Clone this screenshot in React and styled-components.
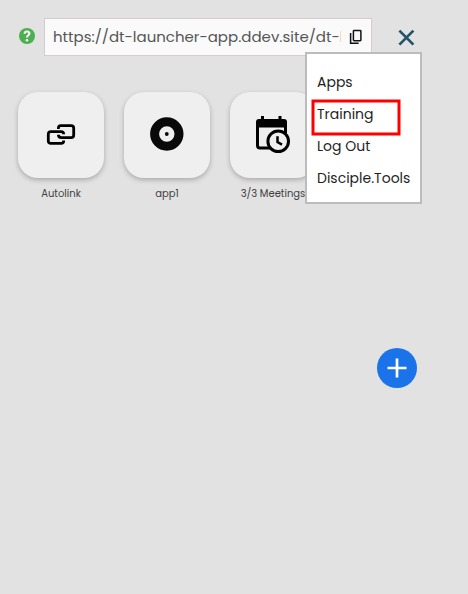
import React from 'react';
import styled, { createGlobalStyle } from 'styled-components';

const GlobalStyle = createGlobalStyle`
  *, *::before, *::after { box-sizing: border-box; }
  body {
    margin: 0;
    background: #e2e2e2;
    font-family: Poppins, Inter, "Open Sans", sans-serif;
    color: #212529;
  }
  button { border: 0; padding: 0; background: none; font: inherit; color: inherit; cursor: pointer; }
`;

const Page = styled.main`
  position: relative;
  height: 594px;
  overflow: hidden;
  padding-top: 18px;
`;

const Toolbar = styled.header`
  display: flex;
  height: 38px;
  padding-left: 19px;
`;

const HelpIcon = styled.svg`
  width: 16px;
  height: 16px;
  margin: 10px 9px 0 0;
`;

const UrlField = styled.div`
  display: flex;
  width: 328px;
  height: 38px;
  padding: 0 8px;
  background: #fafafa;
  border: 1px solid #d4cdcf;
`;

const UrlText = styled.div`
  width: 288px;
  overflow: hidden;
  white-space: nowrap;
  font-size: 15px;
  line-height: 35px;
  color: #555;
`;

const CopyButton = styled.button`
  margin: 10px 0 0 8px;
  width: 14px;
  height: 16px;
  svg { display: block; }
`;

const CloseButton = styled.button`
  width: 18px;
  height: 18px;
  margin: 10px 0 0 25px;
  svg { display: block; }
`;

const AppGrid = styled.section`
  display: grid;
  grid-template-columns: repeat(3, 88px);
  column-gap: 18px;
  margin: 36px 0 0 17px;
`;

const AppItem = styled.div`
  display: flex;
  flex-direction: column;
  align-items: center;
`;

const Tile = styled.button`
  width: 86px;
  height: 86px;
  border-radius: 20px;
  background: #efefef;
  box-shadow: 0 2px 5px rgba(0, 0, 0, 0.25);
  svg { display: block; }
`;

const AppLabel = styled.span`
  margin-top: 8px;
  font-size: 10px;
  line-height: 15px;
  white-space: nowrap;
  color: #3f3f3f;
`;

const Menu = styled.nav`
  position: absolute;
  left: 305px;
  top: 52px;
  width: 117px;
  height: 152px;
  padding: 12px 0 0 10px;
  background: #fff;
  border: 2px solid #bcbcbc;
`;

const MenuItem = styled.a`
  display: block;
  height: 32px;
  line-height: 32px;
  font-size: 14px;
  white-space: nowrap;
  color: #1f1f1f;
`;

const Highlight = styled.span`
  position: absolute;
  left: 5px;
  top: 46px;
  width: 88px;
  height: 35px;
  border: 2px solid #ff0000;
  box-shadow: 0 0 0 0.5px #ff0000, inset 0 0 0 0.5px #ff0000;
`;

const AddButton = styled.button`
  position: absolute;
  left: 377px;
  top: 348px;
  width: 40px;
  height: 40px;
  border-radius: 50%;
  background: #1a73e8;
  svg { display: block; }
`;

const LinkIcon = () => (
  <svg width="86" height="86" viewBox="18 92 86 86" fill="none" stroke="#000" strokeWidth="2.8">
    <path d="M58.4 129V128Q58.4 125.6 60.8 125.6H71.1Q73.7 125.6 73.7 128.2V135Q73.7 137.6 71.1 137.6H61.4Q58.4 137.6 58.4 134.8" />
    <path d="M63.7 134.2Q63.7 131.6 60.9 131.6H50.9Q48.3 131.6 48.3 134.2V140.8Q48.3 143.4 50.9 143.4H61.2Q63.7 143.4 63.7 140.4" />
  </svg>
);

const DiscIcon = () => (
  <svg width="86" height="86" viewBox="124 92 86 86">
    <circle cx="166.8" cy="134" r="12.2" fill="none" stroke="#090909" strokeWidth="9" />
    <circle cx="166.8" cy="134" r="1.9" fill="#090909" />
  </svg>
);

const MeetingIcon = () => (
  <svg width="86" height="86" viewBox="230 92 86 86" fill="none" stroke="#000">
    <path d="M262.5 116V121M280 116V121" strokeWidth="3" />
    <path d="M257.5 122V145.5Q257.5 148 260 148H270M285.5 122V133" strokeWidth="3" />
    <path d="M256 127.5V122Q256 119 259 119H284Q287 119 287 122V127.5Z" fill="#000" stroke="none" />
    <circle cx="278.2" cy="141.3" r="10.3" fill="#efefef" strokeWidth="3" />
    <path d="M277.5 136.2V142L282 144.6" strokeWidth="2.5" />
  </svg>
);

const apps = [
  { name: 'Autolink', Icon: LinkIcon },
  { name: 'app1', Icon: DiscIcon },
  { name: '3/3 Meetings', Icon: MeetingIcon },
];

const menuItems = ['Apps', 'Training', 'Log Out', 'Disciple.Tools'];

export default function App() {
  return (
    <>
      <GlobalStyle />
      <Page>
        <Toolbar>
          <HelpIcon viewBox="0 0 16 16">
            <circle cx="8" cy="8" r="8" fill="#4caf50" />
            <path d="M5.6 5.8C5.8 2.7 10.5 2.8 10.4 5.6C10.4 7.4 8 7.2 8 9.4" fill="none" stroke="#fff" strokeWidth="2.1" />
            <circle cx="8" cy="12.2" r="1.3" fill="#fff" />
          </HelpIcon>
          <UrlField>
            <UrlText>https://dt-launcher-app.ddev.site/dt-launcher</UrlText>
            <CopyButton aria-label="Copy link">
              <svg width="14" height="16" viewBox="349 29 14 16" fill="none" stroke="#111" strokeWidth="1.5">
                <rect x="353.4" y="30.5" width="7.5" height="10.2" rx="0.7" />
                <path d="M350.6 33V43.2H358.6" />
              </svg>
            </CopyButton>
          </UrlField>
          <CloseButton aria-label="Close menu">
            <svg width="18" height="18" viewBox="0 0 18 18" fill="none" stroke="#245268" strokeWidth="2.7">
              <path d="M2.4 2.6L16.4 16.6M16.4 2.6L2.4 16.6" />
            </svg>
          </CloseButton>
        </Toolbar>
        <AppGrid>
          {apps.map(({ name, Icon }) => (
            <AppItem key={name}>
              <Tile aria-label={name}><Icon /></Tile>
              <AppLabel>{name}</AppLabel>
            </AppItem>
          ))}
        </AppGrid>
        <Menu>
          {menuItems.map((label) => (
            <MenuItem key={label}>{label}</MenuItem>
          ))}
          <Highlight />
        </Menu>
        <AddButton aria-label="Add app">
          <svg width="40" height="40" viewBox="0 0 40 40" fill="none" stroke="#fff" strokeWidth="2.7">
            <path d="M10.5 20H29.5M20 10.5V29.5" />
          </svg>
        </AddButton>
      </Page>
    </>
  );
}
